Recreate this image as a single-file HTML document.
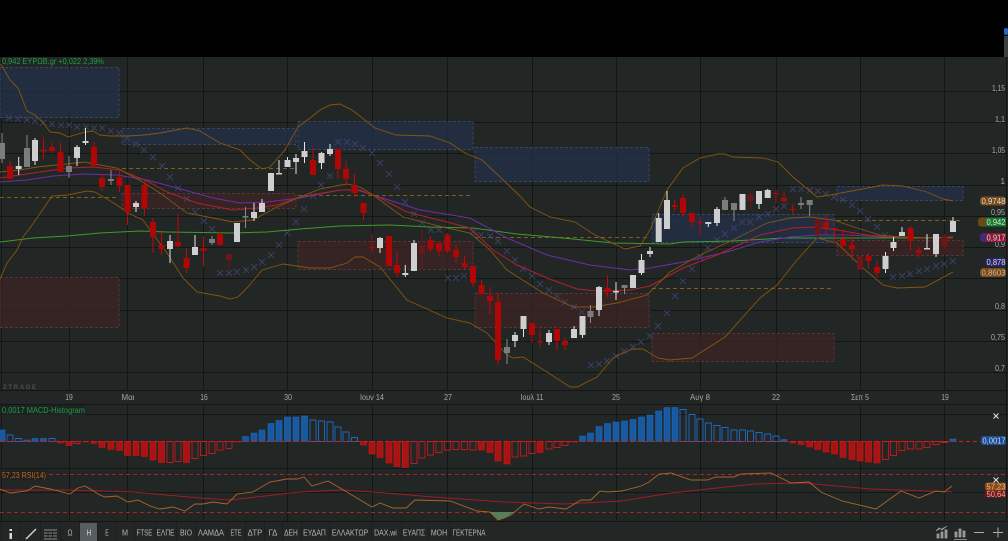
<!DOCTYPE html>
<html><head><meta charset="utf-8"><title>Chart</title>
<style>
html,body{margin:0;padding:0;background:#000;width:1008px;height:541px;overflow:hidden}
svg{display:block;font-family:"Liberation Sans","DejaVu Sans",sans-serif;filter:blur(.35px)}
</style></head><body>
<svg width="1008" height="541" viewBox="0 0 1008 541" xmlns="http://www.w3.org/2000/svg">
<rect width="1008" height="541" fill="#000"/>
<rect y="57" width="1008" height="484" fill="#222625"/>
<rect x="1004" y="36" width="4" height="21" fill="#3a403e"/>
<rect x="1004" y="28" width="4" height="7" rx="2" fill="#1c6cc4"/>
<!-- grid -->
<path d="M0 91.5H1006M0 122.5H1006M0 153.5H1006M0 185.5H1006M0 216.5H1006M0 247.5H1006M0 278.5H1006M0 310.5H1006M0 341.5H1006M0 372.5H1006M0 390.5H1006M0 404.5H1006M0 414.5H1006M0 468.5H1006M0 492.5H1006M0 521.5H1006" stroke="#131615" fill="none"/>
<path d="M1.5 57V521M69.5 57V521M127.5 57V521M203.5 57V521M287.5 57V521M372.5 57V521M447.5 57V521M532.5 57V521M616.5 57V521M700.5 57V521M776.5 57V521M860.5 57V521M944.5 57V521M1006.5 57V541" stroke="#131615" fill="none"/>
<rect x="0" y="391" width="1006" height="13" fill="#222625"/>
<!-- zones -->
<g fill="#24304b" fill-opacity=".72" stroke="#39445f" stroke-dasharray="3 2">
<rect x="0" y="67.5" width="119" height="50"/><rect x="122" y="128.5" width="174" height="16"/><rect x="298" y="121.5" width="175" height="28"/><rect x="475" y="147.5" width="174" height="34"/><rect x="652" y="214.5" width="182" height="28"/><rect x="837" y="186.5" width="126" height="14"/>
</g>
<g fill="#3e2323" fill-opacity=".72" stroke="#583636" stroke-dasharray="3 2">
<rect x="0" y="277.5" width="119" height="50"/><rect x="122" y="193.5" width="174" height="15"/><rect x="298" y="241.5" width="175" height="28"/><rect x="475" y="293.5" width="174" height="34"/><rect x="652" y="333.5" width="182" height="28"/><rect x="837" y="240.5" width="126" height="15"/>
</g>
<path d="M0 197.5H119M122 168.5H296M298 195.5H473M475 237.5H649M652 288.5H834M837 220.5H963" stroke="#7d6015" stroke-dasharray="4 3" fill="none"/>
<!-- SAR -->
<g stroke="#3c4166" fill="none" stroke-width=".9"><path d="M6 115l6 6m0-6l-6 6M15 116l6 6m0-6l-6 6M24 117l6 6m0-6l-6 6M32 118l6 6m0-6l-6 6M40 120l6 6m0-6l-6 6M49 121l6 6m0-6l-6 6M58 122l6 6m0-6l-6 6M66 122l6 6m0-6l-6 6M74 124l6 6m0-6l-6 6M83 124l6 6m0-6l-6 6M91 125l6 6m0-6l-6 6M99 125l6 6m0-6l-6 6M108 128l6 6m0-6l-6 6M116 130l6 6m0-6l-6 6M124 135l6 6m0-6l-6 6M133 141l6 6m0-6l-6 6M141 147l6 6m0-6l-6 6M150 154l6 6m0-6l-6 6M159 163l6 6m0-6l-6 6M167 174l6 6m0-6l-6 6M175 185l6 6m0-6l-6 6M184 196l6 6m0-6l-6 6M192 209l6 6m0-6l-6 6M201 218l6 6m0-6l-6 6M209 226l6 6m0-6l-6 6M217 270l6 6m0-6l-6 6M226 270l6 6m0-6l-6 6M234 269l6 6m0-6l-6 6M243 267l6 6m0-6l-6 6M251 264l6 6m0-6l-6 6M259 259l6 6m0-6l-6 6M268 252l6 6m0-6l-6 6M276 242l6 6m0-6l-6 6M284 230l6 6m0-6l-6 6M293 219l6 6m0-6l-6 6M301 206l6 6m0-6l-6 6M310 193l6 6m0-6l-6 6M318 182l6 6m0-6l-6 6M327 173l6 6m0-6l-6 6M335 139l6 6m0-6l-6 6M344 139l6 6m0-6l-6 6M352 141l6 6m0-6l-6 6M360 145l6 6m0-6l-6 6M369 150l6 6m0-6l-6 6M377 160l6 6m0-6l-6 6M386 171l6 6m0-6l-6 6M394 184l6 6m0-6l-6 6M402 199l6 6m0-6l-6 6M411 211l6 6m0-6l-6 6M419 220l6 6m0-6l-6 6M428 227l6 6m0-6l-6 6M436 227l6 6m0-6l-6 6M445 275l6 6m0-6l-6 6M453 275l6 6m0-6l-6 6M461 273l6 6m0-6l-6 6M470 229l6 6m0-6l-6 6M478 232l6 6m0-6l-6 6M487 233l6 6m0-6l-6 6M495 238l6 6m0-6l-6 6M504 248l6 6m0-6l-6 6M512 257l6 6m0-6l-6 6M520 266l6 6m0-6l-6 6M529 273l6 6m0-6l-6 6M537 281l6 6m0-6l-6 6M546 287l6 6m0-6l-6 6M554 293l6 6m0-6l-6 6M562 299l6 6m0-6l-6 6M571 304l6 6m0-6l-6 6M579 309l6 6m0-6l-6 6M588 362l6 6m0-6l-6 6M596 361l6 6m0-6l-6 6M604 358l6 6m0-6l-6 6M613 353l6 6m0-6l-6 6M621 348l6 6m0-6l-6 6M630 344l6 6m0-6l-6 6M638 339l6 6m0-6l-6 6M647 333l6 6m0-6l-6 6M655 323l6 6m0-6l-6 6M664 310l6 6m0-6l-6 6M672 293l6 6m0-6l-6 6M680 278l6 6m0-6l-6 6M689 266l6 6m0-6l-6 6M697 254l6 6m0-6l-6 6M705 245l6 6m0-6l-6 6M714 237l6 6m0-6l-6 6M722 231l6 6m0-6l-6 6M731 225l6 6m0-6l-6 6M739 219l6 6m0-6l-6 6M747 219l6 6m0-6l-6 6M756 214l6 6m0-6l-6 6M765 211l6 6m0-6l-6 6M773 206l6 6m0-6l-6 6M781 203l6 6m0-6l-6 6M790 186l6 6m0-6l-6 6M798 186l6 6m0-6l-6 6M807 187l6 6m0-6l-6 6M815 188l6 6m0-6l-6 6M823 191l6 6m0-6l-6 6M831 194l6 6m0-6l-6 6M840 197l6 6m0-6l-6 6M849 202l6 6m0-6l-6 6M857 208l6 6m0-6l-6 6M865 216l6 6m0-6l-6 6M874 224l6 6m0-6l-6 6M882 232l6 6m0-6l-6 6M890 274l6 6m0-6l-6 6M899 273l6 6m0-6l-6 6M907 271l6 6m0-6l-6 6M916 268l6 6m0-6l-6 6M924 266l6 6m0-6l-6 6M933 263l6 6m0-6l-6 6M941 261l6 6m0-6l-6 6M950 258l6 6m0-6l-6 6"/></g>
<!-- MAs -->
<polyline fill="none" stroke="#3f9a2c" stroke-width="1" points="0,242 33,238 67,236 100,233 140,231 167,232 233,233 267,232 300,229 340,226 390,225 430,227 473,228 517,234 563,238 613,243 670,244 683,242 733,241 783,238 817,238 883,238 943,238"/>
<polyline fill="none" stroke="#6a2fa8" stroke-width="1" points="0,182 27,180 53,176 83,174 117,175 147,180 177,188 213,198 240,203 267,202 300,198 340,190 357,190 373,195 420,210 470,218 507,238 547,255 590,265 630,270 650,268 683,262 727,252 760,242 790,237 817,235 850,235 883,237 953,238"/>
<polyline fill="none" stroke="#b02030" stroke-width="1" points="0,178 33,173 67,168 93,167 120,170 147,181 167,192 197,203 233,210 257,208 277,205 300,197 340,190 360,190 380,198 407,212 447,222 470,228 493,250 517,265 547,278 577,289 597,291 630,290 650,286 683,268 717,255 760,235 793,228 817,227 837,230 867,235 890,237 953,238"/>
<g fill="none" stroke="#84570f" stroke-width=".9">
<polyline points="0,64 2,66 10,80 18,88 27,111 35,115 43,122 50,132 60,133 68,137 85,132 93,131 100,135 110,136 128,136 145,135 160,133 187,128 200,131 220,143 240,150 250,160 262,169 270,167 285,150 298,127 310,118 320,110 330,105 340,104 352,110 375,128 396,135 430,136 450,143 465,153 482,160 500,177 520,196 530,207 550,217 575,222 595,235 625,249 640,246 650,230 667,190 683,168 700,158 718,154 725,154 733,157 763,158 778,162 793,177 817,197 830,195 857,190 883,185 903,186 927,192 943,199 953,201"/>
<polyline points="0,279 7,263 17,250 23,237 30,228 52,196 68,195 87,191 95,192 117,205 128,213 143,220 150,230 167,253 183,278 197,292 220,296 230,299 238,297 248,287 262,270 283,264 310,268 330,268 347,263 355,257 363,257 380,267 407,300 447,318 470,323 487,333 507,355 513,358 523,357 547,372 570,387 577,387 597,377 613,358 632,349 643,349 658,358 670,360 692,358 725,337 760,298 777,285 797,260 817,238 837,243 863,268 883,285 897,288 925,287 953,272"/>
<polyline points="0,172 20,170 37,167 57,165 85,162 100,165 117,168 143,182 160,193 187,213 213,218 233,222 253,220 277,207 300,197 320,189 330,187 347,184 360,187 373,195 403,217 447,228 470,233 490,250 507,270 543,293 573,307 593,307 617,303 647,295 670,272 700,255 733,240 767,223 790,218 810,217 833,220 857,228 880,235 900,237 923,238 953,237"/>
</g>
<!-- candles: red -->
<path stroke="#c00808" fill="none" d="M10 161V179M43.5 137V159M52 143V153M60.5 143V172M94 142V166M102 174V191M119.5 171V192M127.5 185V225M144.5 181V216M153 218V253M161.5 232V255M178 214V249M186.5 248V273M203.5 236V266M220 232V245M313 148V175M338 149V179M346 161V186M354.5 174V197M363.5 203V220M372 234V252M389 236V266M397 251V277M430.5 236V252M439 243V256M447.5 233V253M456 245V263M464.5 256V269M473 266V287M481.5 280V294M490 287V314M498 293V365M532 323V343M540 329V347M557 329V350M565 337V350M607.5 275V297M674.6 199V210M683 194V217M692 213V227M700 217V235M776 190V203M784 192V203M792.7 204V215M826 214V235M834.5 228V243M843 229V247M852 233V260M868.5 253V269M877 260V277M910.5 226V251M918.7 247V257"/>
<path fill="#b00606" d="M7 166h6V179h-6zM40.500 149.500h6V151.500h-6zM49 147h6V151h-6zM57.500 152h6V172h-6zM91 147h6V166h-6zM99 178h6V187h-6zM116.500 177h6V186h-6zM124.500 185h6V212h-6zM141.500 185h6V208h-6zM150 222h6V237h-6zM158.500 245h6V249h-6zM175 242h6V246h-6zM183.500 258h6V268h-6zM200.500 248h6V251h-6zM217 234h6V245h-6zM310 160h6V175h-6zM335 149h6V169h-6zM343 169h6V179h-6zM351.500 185h6V193h-6zM360.500 203h6V213h-6zM369 247h6V248h-6zM386 236h6V266h-6zM394 265h6V273h-6zM427.500 240h6V249h-6zM436 243h6V251h-6zM444.500 235h6V251h-6zM453 250h6V257h-6zM461.500 263h6V267h-6zM470 266h6V283h-6zM478.500 285h6V294h-6zM487 296h6V301h-6zM495 302h6V360h-6zM529 323h6V335h-6zM537 341h6V342h-6zM554 329h6V341h-6zM562 341h6V345h-6zM604.500 288h6V292h-6zM671.600 205h6V207h-6zM680 198h6V213h-6zM689 213h6V222h-6zM697 222h6V223h-6zM773 193h6V194h-6zM781 198h6V201h-6zM789.700 209h6V210h-6zM823 222h6V228h-6zM831.500 228h6V229h-6zM840 239h6V246h-6zM849 245h6V249h-6zM865.500 256h6V261h-6zM874 267h6V273h-6zM907.500 228h6V241h-6zM915.700 250h6V253h-6z"/>
<!-- dark red -->
<path stroke="#7a1014" fill="none" d="M229 254V270M422 230V269M750.500 192V209M817.700 219V238M860 256V270M944.500 234V249"/>
<path fill="#6e1518" d="M226 254h6V260h-6zM419 246h6V254h-6zM747.500 195h6V201h-6zM814.700 219h6V234h-6zM857 256h6V270h-6zM941.500 236h6V247h-6z"/>
<!-- grey -->
<path stroke="#8a8a8a" fill="none" d="M2 133V163M27 135V167M69 156V178M111 170V185M212 236V245M245.500 207V228M507 339V364M590.500 305V323M624.500 285V294M725 197V210M734 203V221M801 197V209M809.700 200V216"/>
<path fill="#7c7c7c" d="M-1 143h6V159h-6zM24 148h6V167h-6zM66 166h6V172h-6zM108 179h6V181h-6zM209 239h6V243h-6zM242.500 216h6V217.500h-6zM504 347h6V353h-6zM587.500 311h6V317h-6zM621.500 285h6V288h-6zM722 200h6V210h-6zM731 203h6V210h-6zM798 203h6V205h-6zM806.700 200h6V205h-6z"/>
<!-- light -->
<path stroke="#e6e6e6" fill="none" d="M18.700 157V175M35 138V165M77 145V166M85.500 128V145M136 201V212M170 235V263M195 235V255M237 223V242M254 203V221M262 199V212M279 160V174M287.500 157V167M296 154V174M304.500 142V163M321.500 152V169M330 144V156M380 237V253M405.300 265V277M414 240V271M515 332V347M523.500 316V337M549 330V345M574 326V338M582.500 316V338M599 286V316M616 282V300M641.500 254V275M650 247V257M658.700 213V242M667 191V229M708.300 222V227M717 207V226M759 191V209M767.700 189V198M885.500 252V273M893.500 237V251M902 227V236M927 234V249M936 234V257M953 217V232"/>
<path fill="#cfcfcf" d="M15.700 166h6V169h-6zM32 140h6V161h-6zM74 147h6V158h-6zM82.500 141h6V143h-6zM133 203h6V207h-6zM167 241h6V249h-6zM192 247h6V255h-6zM234 223h6V242h-6zM251 212h6V218h-6zM259 203h6V212h-6zM268 173h6V191h-6zM276 173h6V174.500h-6zM284.500 160h6V167h-6zM293 158h6V162h-6zM301.500 151h6V157h-6zM318.500 153h6V163h-6zM327 149h6V154h-6zM377 238h6V248h-6zM402.300 273h6V275h-6zM411 243h6V271h-6zM512 335h6V341h-6zM520.500 316h6V329h-6zM546 333h6V342h-6zM571 329h6V338h-6zM579.500 316h6V335h-6zM596 287h6V310h-6zM613 291h6V292.500h-6zM630 275h6V288h-6zM638.500 260h6V273h-6zM647 251h6V254h-6zM655.700 218h6V242h-6zM664 200h6V229h-6zM705.300 222h6V224h-6zM714 209h6V223h-6zM739.500 194h6V210h-6zM756 191h6V204h-6zM764.700 190h6V198h-6zM882.500 256h6V269h-6zM890.500 242h6V248h-6zM899 232h6V236h-6zM924 248h6V249.500h-6zM933 234h6V254h-6zM950 221h6V232h-6z"/>
<!-- axis labels -->
<g fill="#a4a8a6" font-size="8" text-anchor="end" lengthAdjust="spacingAndGlyphs">
<text x="1005" y="91" textLength="13" lengthAdjust="spacingAndGlyphs">1,15</text><text x="1005" y="122" textLength="10" lengthAdjust="spacingAndGlyphs">1,1</text><text x="1005" y="153" textLength="13" lengthAdjust="spacingAndGlyphs">1,05</text><text x="1005" y="184">1</text><text x="1005" y="215" textLength="14" lengthAdjust="spacingAndGlyphs">0,95</text><text x="1005" y="247" textLength="10" lengthAdjust="spacingAndGlyphs">0,9</text><text x="1005" y="309" textLength="10" lengthAdjust="spacingAndGlyphs">0,8</text><text x="1005" y="340" textLength="14" lengthAdjust="spacingAndGlyphs">0,75</text><text x="1005" y="371" textLength="10" lengthAdjust="spacingAndGlyphs">0,7</text>
</g>
<g fill="#a4a8a6" font-size="8" text-anchor="middle">
<text x="69" y="400" textLength="7.500" lengthAdjust="spacingAndGlyphs">19</text><text x="128" y="400" textLength="13" lengthAdjust="spacingAndGlyphs">Μαι</text><text x="204" y="400" textLength="7.500" lengthAdjust="spacingAndGlyphs">16</text><text x="288" y="400" textLength="8" lengthAdjust="spacingAndGlyphs">30</text><text x="372" y="400" textLength="24" lengthAdjust="spacingAndGlyphs">Ιουν 14</text><text x="448" y="400" textLength="8" lengthAdjust="spacingAndGlyphs">27</text><text x="532" y="400" textLength="23" lengthAdjust="spacingAndGlyphs">Ιουλ 11</text><text x="616" y="400" textLength="8" lengthAdjust="spacingAndGlyphs">25</text><text x="700" y="400" textLength="20" lengthAdjust="spacingAndGlyphs">Αυγ 8</text><text x="776" y="400" textLength="8" lengthAdjust="spacingAndGlyphs">22</text><text x="860" y="400" textLength="18" lengthAdjust="spacingAndGlyphs">Σεπ 5</text><text x="945" y="400" textLength="7.500" lengthAdjust="spacingAndGlyphs">19</text>
</g>
<g font-size="8" text-anchor="end" fill="#dcdcdc">
<rect x="980" y="196.500" width="26" height="9" rx="3" fill="#7a4a18"/><text x="1005.500" y="204" textLength="24" lengthAdjust="spacingAndGlyphs">0,9748</text>
<rect x="978" y="217.500" width="14" height="9" rx="3" fill="#6a4a14"/>
<rect x="986" y="217.500" width="20" height="9" fill="#177a2c"/><text x="1005.500" y="225" textLength="19" lengthAdjust="spacingAndGlyphs">0,942</text>
<rect x="980" y="233" width="14" height="9" rx="3" fill="#44287a"/>
<rect x="986" y="233" width="20" height="9" fill="#8c1838"/><text x="1005.500" y="240.500" textLength="19" lengthAdjust="spacingAndGlyphs">0,917</text>
<rect x="985" y="257.500" width="21" height="9" rx="3" fill="#2a2468"/><text x="1005.500" y="265" textLength="19" lengthAdjust="spacingAndGlyphs">0,878</text>
<rect x="980" y="268" width="26" height="9" rx="3" fill="#7a4a18"/><text x="1005.500" y="275.500" fill="#c8b8a0" textLength="24" lengthAdjust="spacingAndGlyphs">0,8603</text>
</g>
<text x="2" y="64" font-size="8" fill="#1e9e48" textLength="102" lengthAdjust="spacingAndGlyphs">0,942 ΕΥΡΩΒ.gr +0,022 2,39%</text>
<text x="3" y="389" font-size="6" font-weight="bold" fill="#4c504f" textLength="33" lengthAdjust="spacing">ZTRADE</text>
<!-- histogram -->
<path fill="#a81414" stroke="#dd1111" stroke-width=".6" d="M57.500 441.500h6V443h-6zM66 441.500h6V445.500h-6zM82.500 441.500h6V442h-6zM91 441.500h6V443.500h-6zM99 441.500h6V447.500h-6zM108 441.500h6V449.500h-6zM116.500 441.500h6V450.500h-6zM124.500 441.500h6V455.500h-6zM133 441.500h6V455.500h-6zM141.500 441.500h6V456.500h-6zM150 441.500h6V460h-6zM158.500 441.500h6V462.500h-6zM183.500 441.500h6V462.500h-6zM234 441.500h6V442h-6zM360.500 441.500h6V445h-6zM369 441.500h6V454h-6zM377 441.500h6V457.500h-6zM386 441.500h6V463h-6zM394 441.500h6V466.500h-6zM402.300 441.500h6V467.500h-6zM478.500 441.500h6V450h-6zM487 441.500h6V452.500h-6zM495 441.500h6V461h-6zM504 441.500h6V464h-6zM537 441.500h6V452.500h-6zM571 441.500h6V442h-6zM789.700 441.500h6V443h-6zM798 441.500h6V444.500h-6zM806.700 441.500h6V447h-6zM814.700 441.500h6V449.500h-6zM823 441.500h6V452h-6zM831.500 441.500h6V454h-6zM840 441.500h6V457.500h-6zM849 441.500h6V459.500h-6zM857 441.500h6V461h-6zM865.500 441.500h6V462h-6zM874 441.500h6V463h-6z"/>
<path fill="none" stroke="#c01a1e" stroke-width=".9" d="M74 441.500h6V443.500h-6zM175 441.500h6V461.500h-6zM167 441.500h6V462.500h-6zM192 441.500h6V458.500h-6zM200.500 441.500h6V455.500h-6zM209 441.500h6V453.500h-6zM217 441.500h6V450h-6zM226 441.500h6V448.500h-6zM411 441.500h6V463.500h-6zM419 441.500h6V458h-6zM427.500 441.500h6V455h-6zM436 441.500h6V452.500h-6zM444.500 441.500h6V450h-6zM453 441.500h6V449.500h-6zM461.500 441.500h6V449.500h-6zM470 441.500h6V450h-6zM512 441.500h6V457h-6zM520.500 441.500h6V456h-6zM529 441.500h6V453.500h-6zM546 441.500h6V449h-6zM554 441.500h6V447.500h-6zM562 441.500h6V445.500h-6zM882.500 441.500h6V459.500h-6zM890.500 441.500h6V455.500h-6zM899 441.500h6V450.500h-6zM907.500 441.500h6V449h-6zM916 441.500h6V449h-6zM924 441.500h6V447.500h-6zM933 441.500h6V444.500h-6zM941.500 441.500h6V442.500h-6z"/>
<path fill="#18599f" stroke="#1c6cc4" stroke-width=".6" d="M-1 441.500h6V430h-6zM24 441.500h6V440h-6zM32 441.500h6V438.500h-6zM40.500 441.500h6V438.500h-6zM242.500 441.500h6V436.500h-6zM251 441.500h6V433h-6zM259 441.500h6V430h-6zM268 441.500h6V423.500h-6zM276 441.500h6V420.500h-6zM284.500 441.500h6V417h-6zM293 441.500h6V417h-6zM301.500 441.500h6V416h-6zM579.500 441.500h6V436h-6zM587.500 441.500h6V433h-6zM596 441.500h6V426.500h-6zM604.500 441.500h6V423.500h-6zM613 441.500h6V422h-6zM621.500 441.500h6V421h-6zM630 441.500h6V419.500h-6zM638.500 441.500h6V417h-6zM647 441.500h6V415h-6zM655.700 441.500h6V411h-6zM664 441.500h6V407.500h-6zM672 441.500h6V407.500h-6zM781 441.500h6V439.500h-6zM950 441.500h6V439h-6z"/>
<path fill="none" stroke="#1c6cc4" stroke-width=".9" d="M7 441.500h6V435h-6zM15.700 441.500h6V438.500h-6zM49 441.500h6V438.500h-6zM310 441.500h6V420h-6zM318.500 441.500h6V421h-6zM327 441.500h6V422h-6zM335 441.500h6V427h-6zM343 441.500h6V432h-6zM351.500 441.500h6V437.500h-6zM680 441.500h6V409.500h-6zM689 441.500h6V414.500h-6zM697 441.500h6V419h-6zM705.300 441.500h6V423h-6zM714 441.500h6V425.500h-6zM722 441.500h6V427.500h-6zM731 441.500h6V430h-6zM739.500 441.500h6V430h-6zM747.500 441.500h6V431h-6zM756 441.500h6V432.500h-6zM764.700 441.500h6V434h-6zM773 441.500h6V436h-6z"/>
<path d="M0 441.500H1006" stroke="#c82020" stroke-dasharray="4 3"/>
<rect x="0" y="405" width="85" height="10" fill="#1e2221"/>
<text x="2" y="413" font-size="8" fill="#1e9e48" textLength="83" lengthAdjust="spacingAndGlyphs">0,0017 MACD-Histogram</text>
<rect x="981" y="436" width="25" height="9" rx="2" fill="#184f96"/><text x="1005.500" y="443.500" font-size="8" text-anchor="end" fill="#d4d8e0" textLength="23" lengthAdjust="spacingAndGlyphs">0,0017</text>
<path d="M993.500 413.500l5 5m0-5l-5 5M993.500 477.500l5 5m0-5l-5 5" stroke="#e0e0e0" stroke-width="1.100" fill="none"/>
<!-- RSI -->
<path d="M0 474.500H1006M0 512.500H1006" stroke="#a82428" stroke-dasharray="4 3"/>
<path d="M490 512L499 520L504 518.500L514 512z" fill="#55805e"/>
<polyline fill="none" stroke="#9e1c28" stroke-width="1" points="0,490 67,490 133,492 200,498 230,500 300,492 340,490 373,492 433,497 504,502 564,504 621,501 671,493 754,484 804,483 871,489 952,492"/>
<polyline fill="none" stroke="#a8682a" stroke-width=".9" points="0,489 10,493 27,491 35,486 50,489 70,494 78,488 85,486 100,495 105,497 117,496 128,502 138,500 150,506 160,509 173,507 185,511 195,504 203,504 213,502 227,504 237,494 253,492 270,482 287,479 297,479 304,477 312,486 328,481 340,488 362,501 372,507 380,503 393,508 406,508 415,500 450,501 477,511 490,512 498,520 504,518 511,515 524,504 539,509 549,507 566,509 581,500 591,500 600,491 607,492 622,491 641,486 649,482 659,474 671,473 691,480 707,480 716,477 734,477 741,474 771,473 791,483 809,482 821,492 842,501 876,509 901,491 919,498 936,491 944,492 952,486"/>
<rect x="0" y="470" width="47" height="10" fill="#1e2221"/>
<text x="2" y="478" font-size="8" fill="#c0651f" textLength="44" lengthAdjust="spacingAndGlyphs">57,23 RSI(14)</text>
<rect x="985" y="482.500" width="21" height="8" rx="2" fill="#8a4a14"/><text x="1005.500" y="489.500" font-size="8" text-anchor="end" fill="#d8c0a0" textLength="19" lengthAdjust="spacingAndGlyphs">57,23</text>
<rect x="985" y="490.500" width="21" height="7" rx="2" fill="#7e1414"/><text x="1005.500" y="497" font-size="8" text-anchor="end" fill="#d8b0b0" textLength="19" lengthAdjust="spacingAndGlyphs">50,64</text>
<!-- toolbar -->
<rect y="522" width="1008" height="19" fill="#222625"/>
<path d="M1.500 522V541M20.500 522V541M40.500 522V541M60.500 522V541M79.500 522V541M97.500 522V541M115.500 522V541M134.500 522V541M155.500 522V541M176.500 522V541M196.500 522V541M227.500 522V541M245.500 522V541M264.500 522V541M282.500 522V541M301.500 522V541M329.500 522V541M371.500 522V541M401.500 522V541M428.500 522V541M449.500 522V541" stroke="#1c1f1e"/>
<rect x="80" y="523" width="17" height="18" fill="#585d5d"/>
<path d="M9.500 529h2.500v2h-2.500zM9.500 533h2.500v6h-2.500z" fill="#d8d8d8"/>
<path d="M26 539L36 529" stroke="#d0d0d0" stroke-width="1.500"/>
<path d="M44 530h13M44 533h3.500M48.500 533h3.500M53 533h4M44 536h3.500M48.500 536h3.500M53 536h4M44 539h13" stroke="#8c8c8c" fill="none"/>
<g fill="#b4b8b6" font-size="8" text-anchor="middle">
<text x="70" y="535.500" textLength="5" lengthAdjust="spacingAndGlyphs">Ω</text><text x="89" y="535.500" fill="#e0e0e0" textLength="4.500" lengthAdjust="spacingAndGlyphs">Η</text><text x="107" y="535.500" textLength="3.500" lengthAdjust="spacingAndGlyphs">Ε</text><text x="125" y="535.500" textLength="6" lengthAdjust="spacingAndGlyphs">Μ</text><text x="144.500" y="535.500" textLength="15.700" lengthAdjust="spacingAndGlyphs">FTSE</text><text x="165.500" y="535.500" textLength="18" lengthAdjust="spacingAndGlyphs">ΕΛΠΕ</text><text x="186" y="535.500" textLength="12" lengthAdjust="spacingAndGlyphs">ΒΙΟ</text><text x="211" y="535.500" textLength="26" lengthAdjust="spacingAndGlyphs">ΛΑΜΔΑ</text><text x="236" y="535.500" textLength="11" lengthAdjust="spacingAndGlyphs">ΕΤΕ</text><text x="255" y="535.500" textLength="14.700" lengthAdjust="spacingAndGlyphs">ΔΤΡ</text><text x="273" y="535.500" textLength="8.700" lengthAdjust="spacingAndGlyphs">ΓΔ</text><text x="291" y="535.500" textLength="13.700" lengthAdjust="spacingAndGlyphs">ΔΕΗ</text><text x="314.500" y="535.500" textLength="22.700" lengthAdjust="spacingAndGlyphs">ΕΥΔΑΠ</text><text x="350" y="535.500" textLength="36.300" lengthAdjust="spacingAndGlyphs">ΕΛΛΑΚΤΩΡ</text><text x="385.500" y="535.500" textLength="22.700" lengthAdjust="spacingAndGlyphs">DAX.wi</text><text x="414" y="535.500" textLength="22.300" lengthAdjust="spacingAndGlyphs">ΕΥΑΠΣ</text><text x="439" y="535.500" textLength="16.300" lengthAdjust="spacingAndGlyphs">ΜΟΗ</text><text x="469" y="535.500" textLength="33" lengthAdjust="spacingAndGlyphs">ΓΕΚΤΕΡΝΑ</text>
</g>
<!-- right icons -->
<path d="M937 538V534h2V538zM941 538V532h2V538zM945 538V530h2V538zM936 531l3-3 3 2 5-4" fill="#8a8e8c" stroke="#a8acaa" stroke-width=".7"/>
<path d="M955 537V532h2V537zM959 537V529h2V537zM963 537V531h2V537zM954 539.500h13" fill="#8a8e8c" stroke="#a8acaa" stroke-width=".7"/>
<path d="M974 532.500h10M993 532.500h10M998 527.500v10" stroke="#a8acaa" stroke-width="1" fill="none"/>
</svg>
</body></html>
